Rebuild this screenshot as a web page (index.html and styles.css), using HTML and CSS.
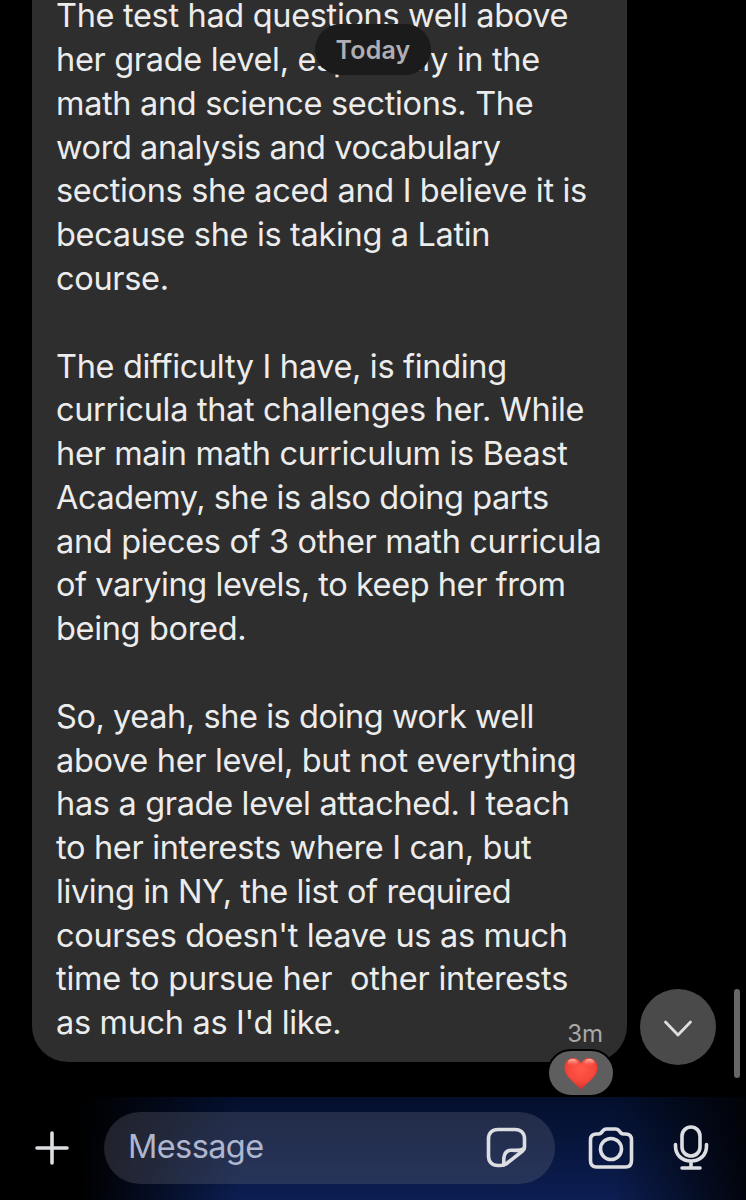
FILE: index.html
```html
<!DOCTYPE html>
<html lang="en">

<head>
    <meta charset="UTF-8">
    <meta name="viewport" content="width=device-width, initial-scale=1.0">
    <title>Chat</title>
    <link rel="stylesheet" href="styles.css">
</head>

<body>
    <main class="chat">
        <div class="date-pill">Today</div>

        <div class="message">
            <p>The test had questions well above
her grade level, especially in the
math and science sections. The
<span class="tight">word analysis and vocabulary</span>
sections she aced and I believe it is
because she is taking a Latin
course.</p>
            <p>The difficulty I have, is finding
curricula that challenges her. While
her main math curriculum is Beast
<span class="tight">Academy, she is also doing parts</span>
and pieces of 3 other math curricula
<span class="tight">of varying levels, to keep her from</span>
being bored.</p>
            <p><span class="tight">So, yeah, she is doing work well</span>
above her level, but not everything
has a grade level attached. I teach
to her interests where I can, but
<span class="tight">living in NY, the list of required</span>
courses doesn't leave us as much
<span class="loose">time to pursue her  other interests</span>
as much as I'd like.</p>
            <span class="time">3m</span>
            <div class="reaction">
                <svg width="34" height="34" viewBox="0 0 34 34">
                    <defs>
                        <radialGradient id="heart" cx="0.5" cy="0.35" r="0.65">
                            <stop offset="0" stop-color="#ff5a48"/>
                            <stop offset="0.6" stop-color="#f5483c"/>
                            <stop offset="1" stop-color="#d92b28"/>
                        </radialGradient>
                        <linearGradient id="shine" x1="0" y1="0" x2="0" y2="1">
                            <stop offset="0" stop-color="#ffd0c4" stop-opacity="0.9"/>
                            <stop offset="1" stop-color="#ff6a58" stop-opacity="0"/>
                        </linearGradient>
                    </defs>
                    <path fill="url(#heart)" d="M17 33C13.500 27 0.500 21 0.500 10.500C0.500 5 4.500 1 9 1C12.500 1 15.500 3 17 6.500C18.500 3 21.500 1 25 1C29.500 1 33.500 5 33.500 10.500C33.500 21 20.500 27 17 33Z"/>
                    <ellipse cx="8.500" cy="5.500" rx="5" ry="3.500" fill="url(#shine)"/>
                    <ellipse cx="25.500" cy="5.500" rx="5" ry="3.500" fill="url(#shine)"/>
                </svg>
            </div>
        </div>

        <button class="scroll-down" aria-label="Scroll down">
            <svg width="30" height="20" viewBox="0 0 30 20">
                <path d="M2.500 4L15 17L27.500 4"/>
            </svg>
        </button>
        <div class="scrollbar"></div>
    </main>

    <footer class="composer">
        <button class="icon-button add" aria-label="Add">
            <svg width="34" height="34" viewBox="0 0 34 34">
                <path d="M17 2V32M2 17H32"/>
            </svg>
        </button>
        <div class="field">
            <span class="placeholder">Message</span>
            <svg width="42" height="42" viewBox="0 0 42 42">
                <path d="M14.500 38.500H12C6 38.500 2.500 35 2.500 29V12C2.500 6 6 2.500 12 2.500H29C35 2.500 38.500 6 38.500 12V20C38.500 21.800 38 22.800 36.500 24L20 37C18.500 38 17 38.500 14.500 38.500Z"/>
                <path d="M17.500 38C18.200 35.500 17.500 33 18 30C18.600 26 21 23.500 25 23.300C29.500 23 33.500 24.500 38 21.500"/>
            </svg>
        </div>
        <button class="icon-button camera" aria-label="Camera">
            <svg width="46" height="44" viewBox="0 0 46 44">
                <path d="M8.500 8H10.500C15 8 13.500 3 18.500 3H27.500C32.500 3 31 8 35.500 8H37.500C41.500 8 43.500 10.500 43.500 14V34.500C43.500 38.500 41.500 41 37.500 41H8.500C4.500 41 2.500 38.500 2.500 34.500V14C2.500 10.500 4.500 8 8.500 8Z"/>
                <circle cx="23" cy="23" r="10.500"/>
            </svg>
        </button>
        <button class="icon-button mic" aria-label="Voice message">
            <svg width="36" height="46" viewBox="0 0 36 46">
                <rect x="9" y="2" width="18" height="29" rx="9"/>
                <path d="M2.500 19.500V21C2.500 30 9 36 18 36S33.500 30 33.500 21V19.500M18 36V43M9 43H27"/>
            </svg>
        </button>
    </footer>
</body>

</html>
```
FILE: styles.css
```css
* {
    box-sizing: border-box;
}

body {
    margin: 0;
    height: 1200px;
    display: flex;
    flex-direction: column;
    overflow: hidden;
    background-color: #000;
    font-family: Inter, "Liberation Sans", sans-serif;
}

button {
    padding: 0;
    border: none;
    background: none;
}

svg {
    display: block;
    fill: none;
    stroke-linecap: round;
    stroke-linejoin: round;
}

.chat {
    position: relative;
    display: flex;
    align-items: flex-end;
    height: 1097px;
    padding: 0 0 35px 32px;
}

.date-pill {
    position: absolute;
    z-index: 1;
    top: 24px;
    left: 315px;
    width: 116px;
    height: 51px;
    border-radius: 26px;
    background-color: #1b1b1b;
    color: #aeaeb4;
    font-size: 25px;
    font-weight: 600;
    line-height: 52px;
    letter-spacing: 0.2px;
    text-align: center;
}

.message {
    position: relative;
    flex: none;
    width: 595px;
    padding: 0 24px 17px;
    border-radius: 0 0 36px 36px;
    background-color: #2e2e2e;
    color: #ececec;
}

.message p {
    margin: 0 0 43.78px;
    font-size: 32.5px;
    line-height: 43.78px;
    letter-spacing: -0.33px;
    white-space: pre;
}

.message p:last-of-type {
    margin-bottom: 0;
}

.tight {
    letter-spacing: -0.43px;
}

.loose {
    letter-spacing: -0.22px;
}

.time {
    position: absolute;
    right: 24px;
    bottom: 14px;
    color: #a8a8a8;
    font-size: 24px;
    line-height: 28px;
}

.reaction {
    position: absolute;
    right: 12px;
    bottom: -35px;
    display: flex;
    align-items: center;
    justify-content: center;
    width: 68px;
    height: 48px;
    border: 2px solid #000;
    border-radius: 24px;
    background-color: #5e5e5e;
}

.reaction svg {
    margin-top: 2px;
}

.scroll-down {
    position: absolute;
    right: 30px;
    bottom: 32px;
    display: flex;
    align-items: center;
    justify-content: center;
    width: 76px;
    height: 76px;
    border-radius: 50%;
    background-color: #4a4a4a;
}

.scroll-down svg {
    margin-top: 2px;
    stroke: #dedede;
    stroke-width: 2.8;
}

.scrollbar {
    position: absolute;
    right: 6px;
    bottom: 19px;
    width: 6px;
    height: 89px;
    border-radius: 3px;
    background-color: #666;
}

.composer {
    display: flex;
    align-items: center;
    height: 103px;
    padding: 0 37px 2px 35px;
    background:
        linear-gradient(90deg, #000 11%, transparent 32%, transparent 82%, rgba(0, 0, 0, 0.85) 100%),
        linear-gradient(#030f2c, #0c1e52);
}

.field {
    display: flex;
    align-items: center;
    justify-content: space-between;
    width: 451px;
    height: 72px;
    margin: 0 33px 0 35px;
    padding: 0 27px 0 24px;
    border-radius: 36px;
    background-color: rgba(105, 110, 125, 0.3);
}

.placeholder {
    padding-bottom: 3px;
    color: #aeb6d0;
    font-size: 32.5px;
    letter-spacing: -0.6px;
}

.composer svg {
    stroke: #dcdee2;
    stroke-width: 3.6;
}

.mic {
    margin-left: 39px;
}
```
